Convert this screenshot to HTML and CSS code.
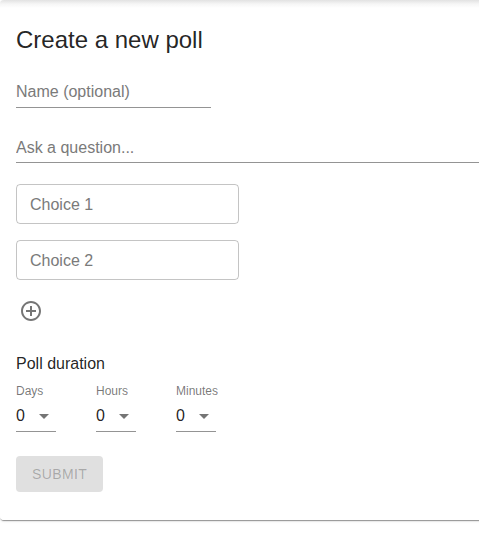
FILE: index.html
```html
<!DOCTYPE html>
<html lang="en">
<head>
<meta charset="utf-8">
<title>Create a new poll</title>
<link rel="stylesheet" href="styles.css">
</head>
<body>
<div class="page">
<form class="card">
  <h2 class="title">Create a new poll</h2>
  <div class="line-field name-field">
    <input class="line-input" type="text" placeholder="Name (optional)">
  </div>
  <div class="line-field question-field">
    <input class="line-input" type="text" placeholder="Ask a question...">
  </div>
  <div class="choice first-choice">
    <input class="choice-input" type="text" placeholder="Choice 1">
  </div>
  <div class="choice">
    <input class="choice-input" type="text" placeholder="Choice 2">
  </div>
  <div class="add-choice" aria-label="Add choice">
    <svg width="24" height="24" viewBox="0 0 24 24"><path fill="rgba(0,0,0,0.54)" d="M13 7h-2v4H7v2h4v4h2v-4h4v-2h-4V7zm-1-5C6.48 2 2 6.48 2 12s4.48 10 10 10 10-4.48 10-10S17.52 2 12 2zm0 18c-4.41 0-8-3.59-8-8s3.59-8 8-8 8 3.59 8 8-3.59 8-8 8z"/></svg>
  </div>
  <div class="duration-title">Poll duration</div>
  <div class="duration">
    <div class="dur-col">
      <div class="dur-label">Days</div>
      <div class="dur-select"><span>0</span><svg width="24" height="24" viewBox="0 0 24 24"><path fill="rgba(0,0,0,0.54)" d="M7 10l5 5 5-5z"/></svg></div>
    </div>
    <div class="dur-col">
      <div class="dur-label">Hours</div>
      <div class="dur-select"><span>0</span><svg width="24" height="24" viewBox="0 0 24 24"><path fill="rgba(0,0,0,0.54)" d="M7 10l5 5 5-5z"/></svg></div>
    </div>
    <div class="dur-col">
      <div class="dur-label">Minutes</div>
      <div class="dur-select"><span>0</span><svg width="24" height="24" viewBox="0 0 24 24"><path fill="rgba(0,0,0,0.54)" d="M7 10l5 5 5-5z"/></svg></div>
    </div>
  </div>
  <div class="actions">
    <button class="submit" type="button" disabled>Submit</button>
  </div>
</form>
</div>
</body>
</html>
```
FILE: styles.css
```css
html {
  background: #fff;
}

body {
  margin: 0;
  padding: 0;
  font-family: "Liberation Sans", Arial, Helvetica, sans-serif;
  color: rgba(0, 0, 0, 0.87);
}

.page {
  overflow: hidden;
  padding-bottom: 12px;
}

.card {
  display: block;
  width: calc(100% + 6px);
  box-sizing: border-box;
  padding: 24px 16px 28px;
  border-radius: 4px;
  background: linear-gradient(to bottom, #e2e2e2 0, #f6f6f6 4px, #ffffff 8px);
  box-shadow: 0 2px 1px -1px rgba(0,0,0,0.25), 0 1px 1px 0 rgba(0,0,0,0.16), 0 1px 3px 0 rgba(0,0,0,0.12);
}

.title {
  margin: 0;
  font-size: 24px;
  line-height: 32px;
  font-weight: 400;
  color: rgba(0, 0, 0, 0.87);
}

.line-field {
  border-bottom: 1px solid rgba(0, 0, 0, 0.42);
}

.name-field {
  margin-top: 19px;
  width: 195px;
}

.question-field {
  margin-top: 22px;
  margin-right: -16px;
}

.line-input,
.choice-input {
  display: block;
  width: 100%;
  box-sizing: border-box;
  border: 0;
  outline: none;
  background: transparent;
  margin: 0;
  font-family: inherit;
  font-size: 16px;
  line-height: 19px;
  color: rgba(0, 0, 0, 0.87);
}

.line-input {
  height: 32px;
  padding: 7px 0 6px;
}

.question-field .line-input {
  padding: 8px 0 5px;
}

.line-input::placeholder,
.choice-input::placeholder {
  color: #7a7a7a;
  opacity: 1;
}

.choice {
  margin-top: 16px;
  width: 223px;
  height: 40px;
  box-sizing: border-box;
  border: 1px solid rgba(0, 0, 0, 0.23);
  border-radius: 4px;
  padding: 0 13px;
  display: flex;
  align-items: center;
}

.first-choice {
  margin-top: 21px;
}

.choice-input {
  height: 19px;
  padding: 0;
}

.add-choice {
  margin-top: 19px;
  margin-left: 3px;
  width: 24px;
  height: 24px;
}

.add-choice svg {
  display: block;
}

.duration-title {
  margin-top: 29px;
  font-size: 16px;
  line-height: 24px;
}

.duration {
  margin-top: 8px;
  display: grid;
  grid-template-columns: 40px 40px 40px;
  column-gap: 40px;
}

.dur-label {
  font-size: 12px;
  line-height: 14px;
  color: rgba(0, 0, 0, 0.54);
  white-space: nowrap;
}

.dur-select {
  margin-top: 2px;
  height: 31px;
  border-bottom: 1px solid rgba(0, 0, 0, 0.42);
  display: flex;
  align-items: center;
  justify-content: space-between;
  font-size: 16px;
  line-height: 19px;
  color: rgba(0, 0, 0, 0.87);
}

.dur-select svg {
  display: block;
  flex: none;
}

.actions {
  margin-top: 24px;
}

.submit {
  display: block;
  margin: 0;
  border: 0;
  border-radius: 4px;
  padding: 6px 16px;
  background: #e0e0e0;
  color: rgba(0, 0, 0, 0.26);
  font-family: inherit;
  font-size: 14px;
  line-height: 24px;
  font-weight: 400;
  letter-spacing: 0.4px;
  text-transform: uppercase;
}
```
